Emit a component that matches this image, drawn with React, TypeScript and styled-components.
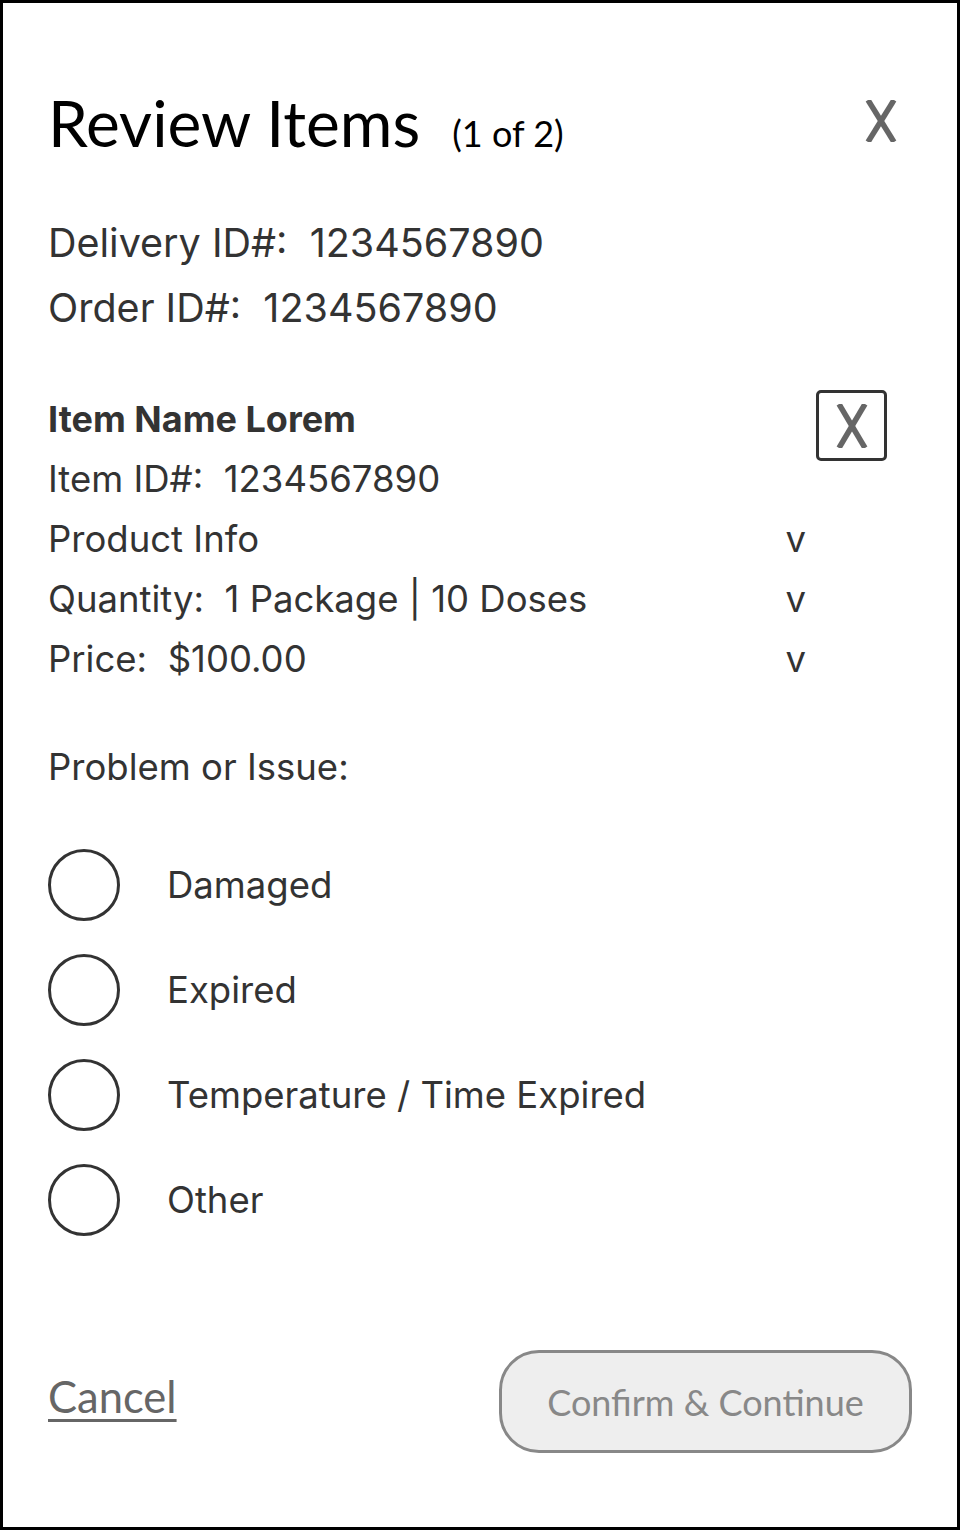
import React from "react";
import styled, { createGlobalStyle } from "styled-components";

const GlobalStyle = createGlobalStyle`
  html, body {
    margin: 0;
    padding: 0;
    background: #fff;
  }
  * {
    box-sizing: border-box;
  }
`;

const Frame = styled.div`
  width: 960px;
  height: 1530px;
  border: 3px solid #000;
  background: #fff;
  padding: 0 45px;
  display: flex;
  flex-direction: column;
  font-family: Inter, "Noto Sans", sans-serif;
  color: #333;
`;

const Header = styled.div`
  display: flex;
  align-items: flex-start;
  justify-content: space-between;
  margin-top: 85px;
  height: 70px;
`;

const TitleGroup = styled.div`
  display: flex;
  align-items: baseline;
  gap: 32px;
`;

const Title = styled.h1`
  margin: 0;
  font-family: Lato, "Liberation Sans", sans-serif;
  font-weight: 400;
  font-size: 64px;
  line-height: 70px;
  color: #000;
`;

const Counter = styled.span`
  font-family: Lato, "Liberation Sans", sans-serif;
  font-size: 36px;
  color: #000;
`;

const CloseButton = styled.button`
  border: none;
  background: none;
  padding: 0;
  margin: 12px 15px 0 0;
  display: flex;
  cursor: pointer;
`;

const XMark = ({ w, h }: { w: number; h: number }) => (
  <svg width={w} height={h} viewBox={`0 0 ${w} ${h}`}>
    <g stroke="#666" strokeWidth="5.5" strokeLinecap="butt">
      <line x1="3" y1="0" x2={w - 3} y2={h} />
      <line x1={w - 3} y1="0" x2="3" y2={h} />
    </g>
  </svg>
);

const IdBlock = styled.div`
  display: flex;
  flex-direction: column;
  margin-top: 53px;
`;

const IdLine = styled.div`
  font-size: 39.5px;
  line-height: 65px;
  white-space: pre;
`;

const ItemCard = styled.div`
  display: flex;
  justify-content: space-between;
  align-items: flex-start;
  margin-top: 48px;
`;

const ItemDetails = styled.div`
  display: flex;
  flex-direction: column;
  width: 758px;
`;

const ItemName = styled.div`
  font-size: 36px;
  font-weight: 700;
  line-height: 60px;
`;

const DetailRow = styled.div`
  display: flex;
  justify-content: space-between;
  font-size: 36.5px;
  line-height: 60px;
  white-space: pre;
`;

const Caret = styled.span`
  font-size: 36.5px;
`;

const RemoveBox = styled.button`
  width: 71px;
  height: 71px;
  margin: 1px 25px 0 0;
  border: 3px solid #333;
  border-radius: 5px;
  background: #fff;
  padding: 0;
  display: flex;
  align-items: center;
  justify-content: center;
  cursor: pointer;
`;

const SectionLabel = styled.div`
  margin-top: 48px;
  font-size: 36.5px;
  line-height: 60px;
`;

const OptionList = styled.div`
  display: flex;
  flex-direction: column;
  gap: 33px;
  margin-top: 52px;
`;

const Option = styled.label`
  display: flex;
  align-items: center;
  gap: 47px;
  font-size: 36.5px;
  cursor: pointer;
`;

const Radio = styled.span`
  width: 72px;
  height: 72px;
  border: 3px solid #333;
  border-radius: 50%;
  flex-shrink: 0;
`;

const Footer = styled.div`
  display: flex;
  justify-content: space-between;
  align-items: center;
  margin-top: auto;
  margin-bottom: 74px;
`;

const CancelLink = styled.a`
  margin-bottom: 12px;
  font-family: Lato, "Liberation Sans", sans-serif;
  font-size: 43.5px;
  color: #666;
  text-decoration: underline;
  text-decoration-thickness: 3px;
  text-underline-offset: 6px;
  cursor: pointer;
`;

const ConfirmButton = styled.button`
  width: 413px;
  height: 103px;
  border: 3px solid #888;
  border-radius: 40px;
  background: #eee;
  font-family: Lato, "Liberation Sans", sans-serif;
  font-size: 36px;
  color: #888;
  cursor: not-allowed;
`;

const options = ["Damaged", "Expired", "Temperature / Time Expired", "Other"];

export default function App() {
  return (
    <>
      <GlobalStyle />
      <Frame>
        <Header>
          <TitleGroup>
            <Title>Review Items</Title>
            <Counter>(1 of 2)</Counter>
          </TitleGroup>
          <CloseButton aria-label="Close">
            <XMark w={32} h={42} />
          </CloseButton>
        </Header>

        <IdBlock>
          <IdLine>Delivery ID#:  1234567890</IdLine>
          <IdLine>Order ID#:  1234567890</IdLine>
        </IdBlock>

        <ItemCard>
          <ItemDetails>
            <ItemName>Item Name Lorem</ItemName>
            <DetailRow>Item ID#:  1234567890</DetailRow>
            <DetailRow>
              <span>Product Info</span>
              <Caret>v</Caret>
            </DetailRow>
            <DetailRow>
              <span>Quantity:  1 Package | 10 Doses</span>
              <Caret>v</Caret>
            </DetailRow>
            <DetailRow>
              <span>Price:  $100.00</span>
              <Caret>v</Caret>
            </DetailRow>
          </ItemDetails>
          <RemoveBox aria-label="Remove item">
            <XMark w={32} h={44} />
          </RemoveBox>
        </ItemCard>

        <SectionLabel>Problem or Issue:</SectionLabel>
        <OptionList>
          {options.map((o) => (
            <Option key={o}>
              <Radio />
              <span>{o}</span>
            </Option>
          ))}
        </OptionList>

        <Footer>
          <CancelLink>Cancel</CancelLink>
          <ConfirmButton disabled>Confirm &amp; Continue</ConfirmButton>
        </Footer>
      </Frame>
    </>
  );
}
